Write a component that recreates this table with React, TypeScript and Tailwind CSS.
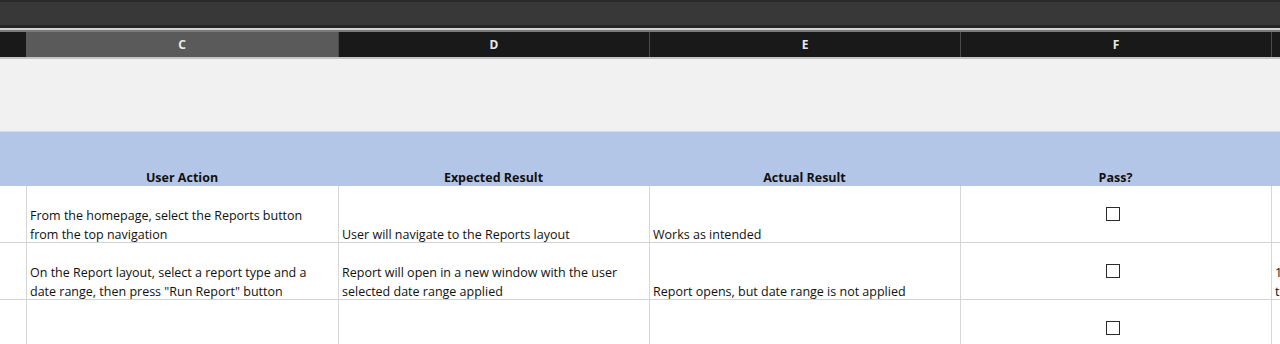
const cols = ["", "C", "D", "E", "F", ""];

const rows = [
  {
    action: ["From the homepage, select the Reports button", "from the top navigation"],
    expected: ["User will navigate to the Reports layout"],
    actual: ["Works as intended"],
    notes: [],
  },
  {
    action: ["On the Report layout, select a report type and a", 'date range, then press "Run Report" button'],
    expected: ["Report will open in a new window with the user", "selected date range applied"],
    actual: ["Report opens, but date range is not applied"],
    notes: ["1", "t"],
  },
  { action: [], expected: [], actual: [], notes: [] },
];

const grid = "grid grid-cols-[26px_312px_311px_311px_311px_1fr]";

function Cell({ lines }: { lines: string[] }) {
  return (
    <div className="flex flex-col justify-end overflow-hidden whitespace-nowrap border-l border-[#d6d6d6] px-[3px] text-[12.5px] leading-[19px] text-[#111]">
      {lines.map((l, i) => (
        <span key={i} className="translate-y-[2px]">
          {l}
        </span>
      ))}
    </div>
  );
}

function Checkbox() {
  return (
    <div className="flex items-center justify-center border-l border-[#d6d6d6] pr-[6px]">
      <div className="h-[14px] w-[14px] border border-[#2b2b2b] bg-white" />
    </div>
  );
}

export default function App() {
  return (
    <div
      className="h-[344px] w-[1280px] overflow-hidden bg-white"
      style={{ fontFamily: '"Open Sans", "Liberation Sans", sans-serif' }}
    >
      {/* toolbar strip */}
      <div className="h-[28px] border-t-2 border-b-[3px] border-t-[#2a2a2a] border-b-[#262626] bg-[#383838]" />
      <div className="h-[2px] bg-[#d2d2d2]" />
      <div className="h-[2px] bg-[#7a7a7a]" />

      {/* column letters */}
      <div className={`${grid} h-[25px] bg-[#191919] text-[12px] font-bold text-[#e8e8e8]`}>
        {cols.map((c, i) => (
          <div
            key={i}
            className={`flex items-center justify-center ${i > 1 ? "border-l border-[#4a4a4a]" : ""} ${
              c === "C" ? "bg-[#5a5a5a]" : ""
            }`}
            style={{ fontFamily: '"Noto Sans", sans-serif' }}
          >
            {c}
          </div>
        ))}
      </div>
      <div className="h-[2px] bg-[#c4c4c4]" />

      {/* title area */}
      <div className="h-[72px] bg-[#f1f1f1]" />

      {/* header row */}
      <div className={`${grid} h-[55px] border-t border-[#d4dbe6] bg-[#b4c6e7] text-[12.5px] font-bold text-[#111]`}>
        <div />
        {["User Action", "Expected Result", "Actual Result", "Pass?"].map((h) => (
          <div key={h} className="flex items-end justify-center leading-[19px]">
            <span className="translate-y-[1px]">{h}</span>
          </div>
        ))}
        <div />
      </div>

      {/* body rows */}
      {rows.map((r, i) => (
        <div key={i} className={`${grid} h-[57px] border-b border-[#d2d2d2]`}>
          <div />
          <Cell lines={r.action} />
          <Cell lines={r.expected} />
          <Cell lines={r.actual} />
          <Checkbox />
          <Cell lines={r.notes} />
        </div>
      ))}
    </div>
  );
}
